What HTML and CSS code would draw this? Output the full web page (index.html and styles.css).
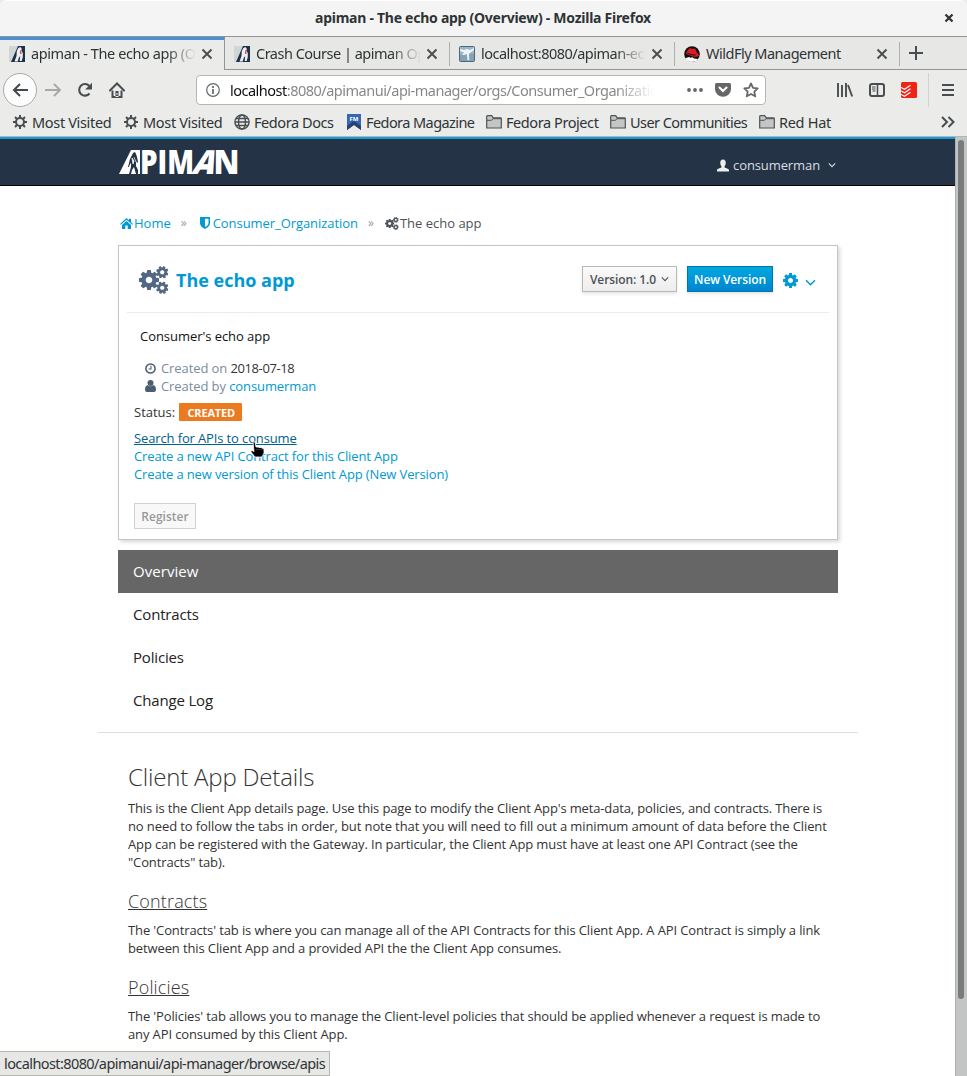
FILE: index.html
```
<!DOCTYPE html>
<html lang="en">
<head>
<meta charset="utf-8">
<title>apiman - The echo app (Overview)</title>
<link rel="stylesheet" href="styles.css">
</head>
<body>
<svg class="defs" width="0" height="0" aria-hidden="true">
  <symbol id="cog" viewBox="0 -128 1536 1536"><path fill-rule="evenodd" d="M1024 640q0 106-75 181t-181 75-181-75-75-181 75-181 181-75 181 75 75 181zM1536 531v222q0 12-8 23t-20 13l-185 28q-19 54-39 91 35 50 107 138 10 12 10 25t-9 23q-27 37-99 108t-94 71q-12 0-26-9l-138-108q-44 23-91 38-16 136-29 186-7 28-36 28h-222q-14 0-24.500-8.500t-11.500-21.500l-28-184q-49-16-90-37l-141 107q-10 9-25 9-14 0-25-11-126-114-165-168-7-10-7-23 0-12 8-23 15-21 51-66.500t54-70.500q-27-50-41-99l-183-27q-13-2-21-12.500t-8-23.500v-222q0-12 8-23t19-13l186-28q14-46 39-92-40-57-107-138-10-12-10-24 0-10 9-23 26-36 98.500-107.500t94.500-71.500q13 0 26 10l138 107q44-23 91-38 16-136 29-186 7-28 36-28h222q14 0 24.500 8.500t11.500 21.500l28 184q49 16 90 37l142-107q9-9 24-9 13 0 25 10 129 119 165 170 7 8 7 22 0 12-8 23-15 21-51 66.500t-54 70.500q26 50 41 98l183 28q13 2 21 12.500t8 23.500z"/></symbol>
  <symbol id="cogs" viewBox="0 0 30 28"><use href="#cog" x="0" y="4" width="20" height="20"/><use href="#cog" x="17" y="0" width="12.500" height="12.500" transform="rotate(20 23.200 6.200)"/><use href="#cog" x="17" y="15.500" width="12.500" height="12.500" transform="rotate(20 23.200 21.700)"/></symbol>
  <symbol id="close" viewBox="0 0 12 12"><path d="M1.500 1.500l9 9m0-9l-9 9" fill="none" stroke="currentColor" stroke-width="1.900"/></symbol>
  <symbol id="closebold" viewBox="0 0 10 10"><path d="M1.500 1.500l7 7m0-7l-7 7" fill="none" stroke="currentColor" stroke-width="2.300"/></symbol>
  <symbol id="gear" viewBox="0 0 16 16"><circle cx="8" cy="8" r="4" fill="none" stroke="currentColor" stroke-width="2"/><path d="M8 1v3M8 12v3M1 8h3M12 8h3M3 3l2.200 2.200M10.800 10.800L13 13M3 13l2.200-2.200M10.800 5.200L13 3" stroke="currentColor" stroke-width="2"/></symbol>
  <symbol id="folder" viewBox="0 0 16 14"><path d="M.7 13V1.500q0-.8.8-.8h4.200l1.500 2.100h7.300q.8 0 .8.800V13z" fill="#c4c6c5" stroke="#4e5356" stroke-width="1.200"/><path d="M1 5.300h4.500l1.400-1.600H15" fill="none" stroke="#4e5356"/></symbol>
  <symbol id="apiman" viewBox="0 0 16 16"><path fill="#d2d5d6" d="M0 0h16v16H0z"/><path fill="#1f3049" d="M9 0h7v16H2z"/><path fill="#eceef0" d="M9.300 2l2-1 1.400 1.500-.3 2 1.400 2.500v4l-1.100 4h-2l.5-5-1.500 2-1 3.500H5.500l2-5.500.3-5z"/><path fill="#d34b4b" d="M11 4.500h1.400v3.500H11z"/></symbol>
  <symbol id="chev" viewBox="0 0 10 6"><path d="M1 1l4 4 4-4" fill="none" stroke="currentColor" stroke-width="1.400"/></symbol>
</svg>

<div class="window">
  <header class="titlebar"><span class="title">apiman - The echo app (Overview) - Mozilla Firefox</span><svg class="winclose"><use href="#closebold"/></svg></header>

  <nav class="tabs">
    <div class="tab active"><svg class="fav"><use href="#apiman"/></svg><span class="tabtext t1">apiman - The echo app (Overview)</span><svg class="x"><use href="#close"/></svg></div>
    <div class="tab second"><svg class="fav"><use href="#apiman"/></svg><span class="tabtext t2">Crash Course | apiman Open</span><svg class="x"><use href="#close"/></svg></div>
    <div class="tab"><svg class="fav" viewBox="0 0 16 16"><rect x=".5" y=".5" width="15" height="15" rx="1" fill="#9bb6c6" stroke="#49687f"/><path d="M1 9l6-2 2 8H1zM10 7l5 1v7h-4z" fill="#84a2b5"/><path d="M1 3l4 1 3-1 3 1 4-2v2l-4 3-1 1v6H8.500L8 8 5 9H3l2-2.500L1 5z" fill="#eef4f5"/></svg><span class="tabtext t3">localhost:8080/apiman-echo</span><svg class="x"><use href="#close"/></svg></div>
    <div class="tab"><svg class="fav" viewBox="0 0 16 16"><circle cx="8" cy="8" r="7.800" fill="#111"/><path d="M2 12q-1 1 1 2.400l4 1.600 5-1 2-2-4-.5L8 11l-1 1-2-1z" fill="#fff"/><path d="M3 5l3-3 2 1 3-.5L13 7q2 1 2 2.500-2 2-6 1T2 7.500q-1-1 1-1.500z" fill="#e11b22"/><path d="M3.500 7q3 2.500 8 2" stroke="#111" fill="none"/></svg><span class="tabtext t4">WildFly Management</span><svg class="x"><use href="#close"/></svg></div>
    <div class="newtab"><svg width="14" height="14"><path d="M7 0v14M0 7h14" stroke="#474d50" stroke-width="2"/></svg></div>
  </nav>

  <div class="toolbar">
    <div class="back"><svg width="18" height="16" viewBox="0 0 18 16"><path d="M17 8H3M9 2L3 8l6 6" fill="none" stroke="#42484b" stroke-width="2"/></svg></div>
    <svg class="fwd" width="17" height="16" viewBox="0 0 17 16"><path d="M0 8h15M9 2l6 6-6 6" fill="none" stroke="#a7a9a9" stroke-width="1.900"/></svg>
    <svg class="reload" width="16" height="16" viewBox="0 0 16 16"><path d="M12.500 11.500A5.800 5.800 0 1 1 12.300 4" fill="none" stroke="#474d50" stroke-width="2.100"/><path d="M15 .8v6.700H8.200z" fill="#474d50"/></svg>
    <svg class="home" width="16" height="16" viewBox="0 0 16 16"><path d="M1 8.500l7-7 7 7" fill="none" stroke="#474d50" stroke-width="2" stroke-linecap="round"/><path fill-rule="evenodd" d="M2.500 8.500h2V14h7V8.500h2V16h-11zM6.500 9h3v6h-3zM7.500 11v2h1v-2z" fill="#474d50"/></svg>
    <div class="url">
      <svg width="14" height="14" viewBox="0 0 14 14"><circle cx="7" cy="7" r="6.300" fill="none" stroke="#646869" stroke-width="1.200"/><path d="M7 6v5M7 3v2" stroke="#646869" stroke-width="1.700"/></svg>
      <span class="address"><b>localhost</b>:8080/apimanui/api-manager/orgs/Consumer_Organization</span>
      <svg class="dots" width="16" height="4" fill="#666"><circle cx="2" cy="2" r="1.900"/><circle cx="8" cy="2" r="1.900"/><circle cx="14" cy="2" r="1.900"/></svg>
      <svg class="pocket" width="16" height="14"><path d="M1.500 0h13Q16 0 16 1.500V6a8 7.800 0 0 1-16 0V1.500Q0 0 1.500 0z" fill="#666"/><path d="M4.500 4.500L8 8l3.500-3.500" fill="none" stroke="#fff" stroke-width="2.100" stroke-linecap="round"/></svg>
      <svg class="star" width="16" height="16" viewBox="0 0 16 16"><path d="M8 1.500l2 4.300 4.700.6-3.400 3.200.9 4.700L8 12l-4.200 2.300.9-4.700L1.300 6.400 6 5.800z" fill="none" stroke="#666" stroke-width="1.800" stroke-linejoin="round"/></svg>
    </div>
    <svg class="library" width="16" height="14" viewBox="0 0 16 14"><path d="M1 0v14M5 2v12M9 0v14M11 2l4.200 11.500" fill="none" stroke="#474d50" stroke-width="1.900"/></svg>
    <svg class="sidebar" width="16" height="14" viewBox="0 0 16 14"><rect x="1" y="1" width="14" height="12" rx="2" fill="none" stroke="#474d50" stroke-width="2"/><path d="M8.500 1v12" stroke="#474d50" stroke-width="1.500"/><path d="M3 4h3.500M3 6h3.500M3.500 8h3" stroke="#474d50"/></svg>
    <svg class="todo" width="16" height="16" viewBox="0 0 16 16"><rect width="16" height="16" rx="1.500" fill="#ed2416"/><path d="M0 5.500l3.500 1.800 6-4M0 9l3.500 1.800 6-4M0 12.500l3.500 1.800 6-4" stroke="#fff" fill="none" stroke-width="1.100"/></svg>
    <div class="menu"><svg width="12" height="12"><path d="M0 1h12M0 6h12M0 11h12" stroke="#474d50" stroke-width="2"/></svg></div>
  </div>

  <div class="bookmarks">
    <span class="bm b1"><svg><use href="#gear"/></svg>Most Visited</span>
    <span class="bm b2"><svg><use href="#gear"/></svg>Most Visited</span>
    <span class="bm b3"><svg viewBox="0 0 16 16"><g fill="none" stroke="#474d50" stroke-width="1.400"><circle cx="8" cy="8" r="7.100"/><ellipse cx="8" cy="8" rx="3.500" ry="7"/><path d="M1 8h14M2 4.500h12M2 11.500h12"/></g></svg>Fedora Docs</span>
    <span class="bm b4"><svg viewBox="0 0 16 16"><path d="M1 0h14v16l-7-5-7 5z" fill="#3767b4"/><path d="M1 12l7-5 7 5v4l-7-5-7 5z" fill="#294172"/><text x="8" y="7" text-anchor="middle" class="fm">FM</text></svg>Fedora Magazine</span>
    <span class="bm b5"><svg class="fold"><use href="#folder"/></svg>Fedora Project</span>
    <span class="bm b6"><svg class="fold"><use href="#folder"/></svg>User Communities</span>
    <span class="bm b7"><svg class="fold"><use href="#folder"/></svg>Red Hat</span>
    <svg class="more" width="14" height="12"><path d="M1 1l5 5-5 5M7.500 1l5 5-5 5" fill="none" stroke="#474d50" stroke-width="2"/></svg>
  </div>

  <div class="viewport">
    <div class="page">
      <div class="navbar">
        <svg class="logo" width="120" height="28" role="img" aria-label="APIMAN"><path d="M13 2h9v24H1z" fill="#fff"/><path d="M15 5l2-1 1 2 1 3 1 5-1 1-1-2v5l2 4v4h-2l-2-7-2 3-1 4h-2l2-7v-4l-1 1-1 3h-1l2-8z" fill="#253346"/><path d="M14 10l2 3-1 3zM16 9l2 5" stroke="#fff" fill="#fff" stroke-width=".7"/><g class="wordmark"><text x="22" y="26" textLength="54" lengthAdjust="spacingAndGlyphs">PIM</text><text x="0" y="0" transform="translate(73 26) skewX(-20)" textLength="22" lengthAdjust="spacingAndGlyphs">A</text><text x="95.500" y="26" textLength="26" lengthAdjust="spacingAndGlyphs">N</text></g></svg>
        <div class="user"><svg width="12" height="13" viewBox="0 0 13 13"><path d="M6.500 0c2 0 3 1.500 3 3.500S8.500 7 8 8c0 1 5 1.500 5 3.500V13H0v-1.500C0 9.500 5 9 5 8c-.5-1-1.500-2.500-1.500-4.500S4.500 0 6.500 0z" fill="#eee"/></svg><span>consumerman</span><svg class="chev"><use href="#chev"/></svg></div>
      </div>

      <main class="container">
        <div class="crumbs">
          <a><svg width="13" height="11" viewBox="0 0 13 11"><path d="M0 6L6.500 0 9 2.300V.8h2v3.400L13 6l-.8.8L6.500 1.800.8 6.800zM2 7l4.500-4L11 7v4H7.700V7.500H5.300V11H2z"/></svg>Home</a><i class="sep s1">»</i>
          <a class="org"><svg class="shield" width="10" height="12" viewBox="0 0 10 12"><path fill-rule="evenodd" d="M0 0h10v6c0 3-3 5-5 6-2-1-5-3-5-6zM5 1.700v8.400C7 9 8.500 7.500 8.500 6V1.700z"/></svg>Consumer_Organization</a><i class="sep s2">»</i>
          <span><svg width="14" height="13"><use href="#cogs"/></svg>The echo app</span>
        </div>

        <section class="card">
          <div class="head">
            <svg class="bigcogs" width="30" height="28"><use href="#cogs"/></svg><h1>The echo app</h1>
            <button class="btn version">Version: 1.0<svg class="chev"><use href="#chev"/></svg></button>
            <button class="btn primary">New Version</button>
            <svg class="setting"><use href="#cog"/></svg><svg class="chev bluechev"><use href="#chev"/></svg>
          </div>
          <p class="desc">Consumer's echo app</p>
          <div class="meta"><svg width="11" height="11" viewBox="0 0 12 12"><circle cx="6" cy="6" r="5" fill="none" stroke="#4b5d73" stroke-width="1.700"/><path d="M6.500 3v3.500H4" fill="none" stroke="#4b5d73" stroke-width="1.200"/></svg><span>Created on <b>2018-07-18</b></span></div>
          <div class="meta"><svg width="11" height="12" viewBox="0 0 11 12"><circle cx="5.500" cy="3" r="3"/><path d="M2.500 5q3 2.500 6 0Q11 6 11 9.500q0 2.500-2 2.500H2Q0 12 0 9.500 0 6 2.500 5z"/></svg><span>Created by <a>consumerman</a></span></div>
          <div class="status">Status: <span class="badge">CREATED</span></div>
          <div class="links"><a class="hover">Search for APIs to consume</a><a>Create a new API Contract for this Client App</a><a>Create a new version of this Client App (New Version)</a></div>
          <button class="btn disabled">Register</button>
          <svg class="cursor" width="15" height="17" viewBox="0 0 15 17"><path d="M3 1q1-1 2 0l1 5h2l1 .5h2l3 1.500v4l-2 4H5l-4-5q-.5-1.500 1-1.500l2 1z" fill="#000" stroke="#fff" stroke-width=".8"/><path d="M7 8v1m2-1v1m2-1v1" stroke="#aaa" stroke-width=".6"/></svg>
        </section>

        <ul class="side"><li class="on">Overview</li><li>Contracts</li><li>Policies</li><li>Change Log</li></ul>

        <article class="details">
          <h2>Client App Details</h2>
          <p><span class="tight">This is the Client App details page. Use this page to modify the Client App's meta-data, policies, and contracts. There is</span><br><span class="loose">no need to follow the tabs in order, but note that you will need to fill out a minimum amount of data before the Client</span><br>App can be registered with the Gateway. In particular, the Client App must have at least one API Contract (see the<br>"Contracts" tab).</p>
          <h3>Contracts</h3>
          <p>The 'Contracts' tab is where you can manage all of the API Contracts for this Client App. A API Contract is simply a link<br>between this Client App and a provided API the the Client App consumes.</p>
          <h3>Policies</h3>
          <p>The 'Policies' tab allows you to manage the Client-level policies that should be applied whenever a request is made to<br>any API consumed by this Client App.</p>
        </article>
      </main>
    </div>
    <div class="scrollbar"><div class="thumb"></div></div>
  </div>
  <div class="statusbar">localhost:8080/apimanui/api-manager/browse/apis</div>
</div>
</body>
</html>
```
FILE: styles.css
```
* { box-sizing: border-box; }
body { margin: 0; background: #fff; font-family: "Open Sans", sans-serif; }
.defs { position: absolute; }
svg { flex: none; display: block; }
.window { width: 967px; height: 1076px; overflow: hidden; display: flex; flex-direction: column; background: #ebebea; color: #2e3436; font-family: "Noto Sans", sans-serif; font-size: 14.5px; letter-spacing: -.5px; white-space: nowrap; position: relative; }

.titlebar { height: 37px; background: #f4f4f4; border-bottom: 1px solid #929593; border-top: 1px solid #fff; border-radius: 7px 7px 0 0; display: flex; align-items: center; padding: 0 0 2px 315px; font-weight: 700; }
.title { width: 337px; font-size: 14px; letter-spacing: -.26px; }
.winclose { width: 10px; height: 10px; margin-left: 292px; }

.tabs { height: 33px; display: flex; background: #e7e7e5; }
.tab { width: 225px; display: flex; align-items: center; border-bottom: 1px solid #929593; position: relative; padding: 1px 12px 0 9px; }
.tab::after { content: ""; position: absolute; right: 0; top: 5px; height: 24px; border-right: 1px solid #aeb0ae; }
.tab.active { background: #ebebea; border-bottom: 0; border-top: 3px solid #4a90d9; padding: 0 12px 2px 9px; }
.tab.active::after { top: -2px; height: 32px; border-color: #929593; }
.fav { width: 16px; height: 16px; margin-right: 6px; }
.tabtext { width: 165px; overflow: hidden; margin-top: -2px; }
.t1 { letter-spacing: -.42px; }
.t1, .t2, .t3 { mask-image: linear-gradient(90deg, #000 82%, transparent 100%); }
.x { width: 12px; height: 12px; margin-left: 5px; color: #474d50; }
.newtab { flex: 1; border-bottom: 1px solid #929593; padding: 9px 0 0 9px; }

.toolbar { height: 40px; display: flex; align-items: center; padding-left: 3px; }
.back { width: 34px; height: 34px; border: 1px solid #aaa; border-radius: 50%; background: #fcfcfc; display: flex; align-items: center; justify-content: center; }
.fwd { margin-left: 8px; }
.reload { margin-left: 15px; }
.home { margin-left: 16px; }
.url { width: 570px; height: 30px; margin-left: 71px; border: 1px solid #b6b6b3; border-radius: 4px; background: #fff; display: flex; align-items: center; padding-left: 9px; }
.address { width: 424px; margin-left: 10px; overflow: hidden; color: #888; mask-image: linear-gradient(90deg, #000 91%, transparent 100%); }
.address b { font-weight: 400; color: #111; }
.dots { margin-left: 33px; }
.pocket { margin-left: 12px; }
.star { margin-left: 12px; }
.library { margin-left: 71px; }
.sidebar { margin-left: 16px; }
.todo { margin-left: 16px; }
.menu { margin-left: 11px; height: 34px; border-left: 1px solid #d1d1d0; padding: 11px 0 0 13px; }

.bookmarks { height: 27px; display: flex; border-bottom: 1px solid #b5b7b5; padding-left: 12px; position: relative; }
.bm { display: flex; align-items: center; gap: 4px; height: 23px; color: #2e3436; }
.bm svg { width: 16px; height: 16px; color: #474d50; }
.bm .fold { height: 14px; }
.b1, .b2 { width: 111px; letter-spacing: -.33px; }
.b3 { width: 112px; letter-spacing: -.42px; }
.b4 { width: 140px; letter-spacing: -.57px; }
.b5 { width: 124px; letter-spacing: -.42px; }
.b6 { width: 149px; letter-spacing: -.57px; }
.b7 { letter-spacing: -.3px; }
.fm { font: 700 6px "Open Sans", sans-serif; fill: #fff; letter-spacing: 0; }
.more { margin: 6px 0 0 auto; width: 14px; position: absolute; right: 12px; }

.viewport { flex: 1; min-height: 0; display: flex; font-family: "Open Sans", sans-serif; letter-spacing: 0; }
.page { width: 955px; background: #fff; overflow: hidden; font-size: 13px; line-height: 18px; }
.scrollbar { width: 12px; background: #c3c5c4; border-left: 1px solid #adb0ae; padding: 3px 0 0 2px; }
.thumb { width: 6px; height: 859px; border-radius: 3px; background: #787c7c; }

.navbar { height: 49px; background: #253346; border-top: 2px solid #169bdb; border-bottom: 1px solid #030303; display: flex; justify-content: space-between; padding: 9px 119px 0 118px; }
.wordmark { font: 800 33px "Open Sans", sans-serif; fill: #fff; }
.user { display: flex; align-items: center; height: 34px; color: #d9dde1; }
.user span { margin: 0 8px 0 4px; letter-spacing: -.1px; }

.chev { width: 8px; height: 6px; }

.container { width: 760px; margin-left: 98px; }
.crumbs { display: flex; height: 59px; padding: 28px 0 0 22px; color: #4d5258; }
.crumbs a, .crumbs span { display: flex; height: 18px; align-items: center; gap: 1px; }
a { color: #0099d3; }
.crumbs svg { fill: currentColor; }
.crumbs .shield { margin-right: 2px; }
.org { letter-spacing: -.06px; }
.sep { font-style: normal; color: #999; font-size: 12px; }
.s1 { margin: 0 13px 0 10px; }
.s2 { margin: 0 11px 0 10px; }

.card { width: 720px; height: 295px; margin-left: 20px; border: 1px solid #c5c5c5; box-shadow: 2px 2px 4px rgba(0,0,0,.16); padding: 0 8px; position: relative; color: #333; }
.head { height: 67px; border-bottom: 1px solid #ebebeb; display: flex; align-items: center; padding: 2px 0 0 12px; }
.bigcogs { fill: #526882; }
h1 { width: 406px; margin: 0 0 0 7px; font-size: 18px; line-height: 24px; color: #0099d3; font-weight: 700; }
.btn { height: 26px; padding: 0 6px; display: flex; align-items: center; justify-content: center; font: 600 12px "Open Sans", sans-serif; border: 1px solid #b7b7b7; background: linear-gradient(#fafafa, #ededed); color: #4d5258; box-shadow: 0 2px 3px rgba(3,3,3,.1); }
.version { width: 95px; gap: 5px; margin-top: -2px; letter-spacing: -.08px; }
.primary { width: 86px; margin: -2px 0 0 10px; padding: 0; color: #fff; letter-spacing: -.1px; border-color: #0076a9; background: linear-gradient(#00a8e1, #0085cf); }
.setting { width: 15px; height: 15px; fill: #0099d3; margin-left: 10px; }
.bluechev { width: 11px; height: 7px; color: #0099d3; margin: 5px 0 0 7px; }
.desc { margin: 14px 0 14px 13px; color: #111; letter-spacing: -.05px; }
.meta { display: flex; align-items: center; padding-left: 18px; height: 18px; gap: 5px; color: #7c8b9e; letter-spacing: -.09px; }
.meta svg { fill: #4b5d73; }
.meta b { color: #333; font-weight: 400; letter-spacing: -.4px; }
.status { margin: 8px 0 0 7px; height: 18px; display: flex; gap: 4px; }
.badge { height: 18px; width: 63px; line-height: 19px; padding-left: 1px; text-align: center; background: #ec7a21; color: #fff; font-weight: 700; font-size: 11px; letter-spacing: -.2px; border-radius: 1px; }
.links { margin: 8px 0 0 7px; display: grid; justify-items: start; letter-spacing: -.13px; }
.hover { color: #00618a; text-decoration: underline; }
.disabled { width: 62px; height: 26px; margin: 20px 0 0 7px; color: #999; background: #f8f8f8; border-color: #d1d1d1; box-shadow: none; }
.cursor { position: absolute; left: 131px; top: 195px; }

.side { list-style: none; margin: 10px 0 0; padding: 0 20px 10px; height: 183px; border-bottom: 1px solid #ddd; font-size: 15px; letter-spacing: -.17px; }
.side li { height: 43px; line-height: 43px; padding-left: 15px; color: #222; }
.side .on { background: #666; color: #fff; letter-spacing: .05px; }

.details { padding: 30px 30px 0; color: #333; letter-spacing: -.12px; }
.details p { margin: 0; }
.tight { letter-spacing: -.145px; }
.loose { letter-spacing: -.1px; }
h2 { margin: 0 0 8px; font-size: 24px; line-height: 28px; font-weight: 300; letter-spacing: -.18px; }
h3 { margin: 20px 0 10px; font-size: 18px; line-height: 20px; font-weight: 300; letter-spacing: .15px; text-decoration: underline; }

.statusbar { position: absolute; left: 0; bottom: 0; width: 330px; height: 25px; padding: 0 4px; border: 1px solid #b5b7b0; border-left: 0; background: #e7e7e5; line-height: 22px; letter-spacing: -.59px; }
```
